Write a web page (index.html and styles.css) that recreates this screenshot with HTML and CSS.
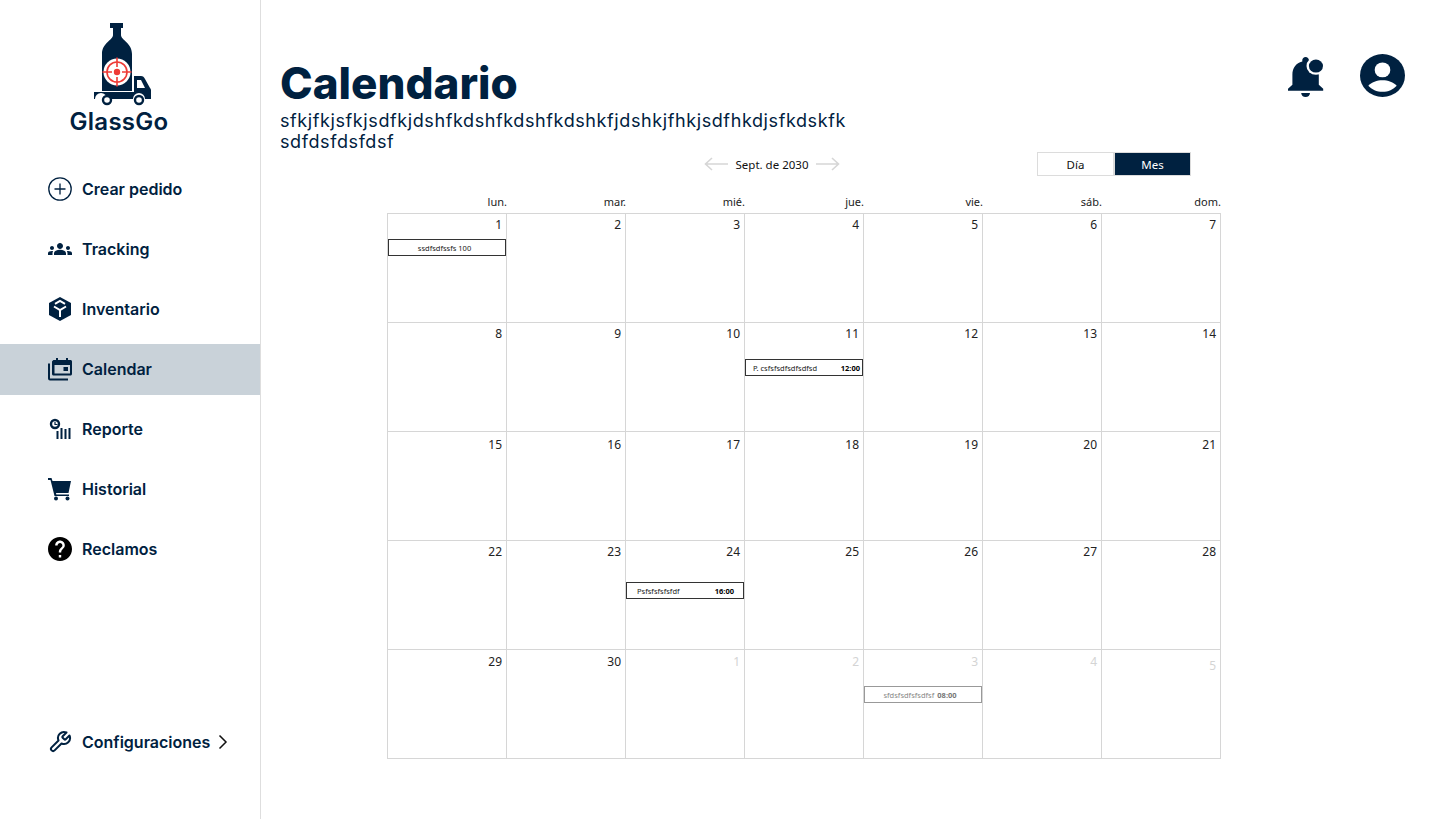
FILE: index.html
```html
<!DOCTYPE html>
<html lang="es">
<head>
<meta charset="UTF-8">
<meta name="viewport" content="width=device-width, initial-scale=1.0">
<title>GlassGo - Calendario</title>
<link rel="stylesheet" href="styles.css">
</head>
<body>
<aside class="sidebar">
    <div class="logo">
        <svg class="logo-mark" viewBox="94 22 58 84" width="58" height="84">
            <path fill="#002140" d="M110 23h13v5h-2v7c0 5 11 8 11 19v37h-30V54c0-11 11-14 11-19v-7h-3z"/>
            <circle cx="117" cy="72" r="13.500" fill="#fff"/>
            <g fill="none" stroke="#ee3b36" stroke-width="1.600">
                <circle cx="117" cy="72" r="10"/>
                <path d="M117 57.500v9.500M117 77v9.500M102.500 72h9.500M122 72h9.500"/>
            </g>
            <circle cx="117" cy="72" r="3.200" fill="#ee3b36"/>
            <path fill="#002140" d="M134 76h7c2 0 3 1 4 3l5 9c1 1 1 2 1 3v8h-6a6 6 0 0 0-12 0h-26a6 6 0 0 0-12 0h-1v-7h40z"/>
            <path fill="#fff" d="M137 80h4l4 8h-8z"/>
            <circle cx="107" cy="100" r="4" fill="#fff" stroke="#002140" stroke-width="2.400"/>
            <circle cx="139" cy="100" r="4" fill="#fff" stroke="#002140" stroke-width="2.400"/>
        </svg>
        <span class="logo-name">GlassGo</span>
    </div>
    <nav class="nav">
        <a class="nav-item">
            <svg class="nav-icon" viewBox="0 0 24 24"><circle cx="12" cy="12" r="11.200" fill="none" stroke="#002140" stroke-width="1.300"/><path d="M12 6.500v11M6.500 12h11" stroke="#002140" stroke-width="1.300"/></svg>
            Crear pedido
        </a>
        <a class="nav-item">
            <svg class="nav-icon" viewBox="0 0 24 24"><path fill="#002140" d="M4 13c1.100 0 2-.9 2-2s-.9-2-2-2-2 .9-2 2 .9 2 2 2zm1.130 1.100c-.37-.06-.74-.1-1.130-.1-.99 0-1.930.21-2.780.58C.48 14.900 0 15.620 0 16.430V18h4.500v-1.610c0-.83.23-1.610.63-2.290zM20 13c1.100 0 2-.9 2-2s-.9-2-2-2-2 .9-2 2 .9 2 2 2zm4 3.430c0-.81-.48-1.530-1.220-1.850-.85-.37-1.790-.58-2.780-.58-.39 0-.76.04-1.130.1.4.68.63 1.460.63 2.290V18H24v-1.570zM16.240 13.650c-1.170-.52-2.610-.9-4.240-.9-1.630 0-3.070.39-4.240.9C6.680 14.130 6 15.210 6 16.390V18h12v-1.610c0-1.180-.68-2.260-1.760-2.740zM12 12c1.660 0 3-1.340 3-3s-1.340-3-3-3-3 1.340-3 3 1.340 3 3 3z"/></svg>
            Tracking
        </a>
        <a class="nav-item">
            <svg class="nav-icon" viewBox="0 0 24 24"><path fill="#002140" d="M12 0l11 6v12l-11 6-11-6V6z"/><path fill="none" stroke="#fff" stroke-width="2" d="M6 9.500l6 3.500 6-3.500M12 13v7M7 6.800l5-2.800 5 2.800"/></svg>
            Inventario
        </a>
        <a class="nav-item nav-item-active">
            <svg class="nav-icon" viewBox="0 0 24 24"><path fill="#002140" d="M8 1h2v2h8V1h2v2h2.500c.8 0 1.500.7 1.500 1.500V17c0 .8-.7 1.500-1.500 1.500h-17c-.8 0-1.500-.7-1.500-1.500V4.500C4.500 3.700 5.200 3 6 3h2zM6.500 8v8.500h15.500V8zM15.500 10h4.500v4h-4.500z"/><path fill="none" stroke="#002140" stroke-width="2" d="M1 6.500V21.500c0 .5.500 1 1 1h18"/></svg>
            Calendar
        </a>
        <a class="nav-item">
            <svg class="nav-icon" viewBox="0 0 24 24"><circle cx="7" cy="7" r="4" fill="none" stroke="#002140" stroke-width="2.400"/><path d="M7 5v2.500h2.500" fill="none" stroke="#002140" stroke-width="1.200"/><path d="M9.500 22V14M13.500 22V11M17.500 22V12M21.500 22V11" stroke="#002140" stroke-width="2"/></svg>
            Reporte
        </a>
        <a class="nav-item">
            <svg class="nav-icon" viewBox="0 0 24 24"><path fill="#002140" d="M0 1h3.500l1 3H23l-2.500 12H8l.3 1.500H21V19H6.500L2.500 3H0z"/><circle cx="8" cy="21.500" r="2" fill="#002140"/><circle cx="19.500" cy="21.500" r="2" fill="#002140"/></svg>
            Historial
        </a>
        <a class="nav-item">
            <svg class="nav-icon" viewBox="2 2 20 20"><path fill="#000" d="M12 2C6.480 2 2 6.480 2 12s4.480 10 10 10 10-4.480 10-10S17.520 2 12 2zm1 17h-2v-2h2v2zm2.070-7.750l-.9.920C13.450 12.900 13 13.500 13 15h-2v-.5c0-1.100.45-2.100 1.170-2.830l1.240-1.260c.37-.36.59-.86.59-1.410 0-1.100-.9-2-2-2s-2 .9-2 2H8c0-2.210 1.790-4 4-4s4 1.790 4 4c0 .88-.36 1.680-.93 2.250z"/></svg>
            Reclamos
        </a>
    </nav>
    <a class="nav-item nav-config">
        <svg class="nav-icon" viewBox="0 0 24 24"><path fill="none" stroke="#002140" stroke-width="2" stroke-linejoin="round" d="M14.700 6.300a1 1 0 0 0 0 1.400l1.600 1.600a1 1 0 0 0 1.400 0l3.770-3.770a6 6 0 0 1-7.940 7.940l-6.910 6.910a2.120 2.120 0 0 1-3-3l6.910-6.910a6 6 0 0 1 7.940-7.940l-3.760 3.760z"/></svg>
        Configuraciones
        <svg class="config-chevron" viewBox="0 0 10 16" width="10" height="16"><path d="M1.500 1.500 8 8l-6.500 6.500" fill="none" stroke="#111" stroke-width="1.500"/></svg>
    </a>
</aside>

<main class="content">
    <header class="top">
        <div>
            <h1 class="title">Calendario</h1>
            <p class="subtitle">sfkjfkjsfkjsdfkjdshfkdshfkdshfkdshkfjdshkjfhkjsdfhkdjsfkdskfk<br>sdfdsfdsfdsf</p>
        </div>
        <div class="top-icons">
            <svg class="bell" viewBox="4 2.500 20 19.500" width="44" height="40" preserveAspectRatio="none"><path fill="#002140" d="M12 22c1.100 0 2-.9 2-2h-4c0 1.100.89 2 2 2zm6-6v-5c0-3.070-1.640-5.640-4.500-6.320V4c0-.83-.67-1.500-1.500-1.500s-1.500.67-1.500 1.500v.68C7.630 5.360 6 7.920 6 11v5l-2 2v1h16v-1l-2-2z"/><circle cx="16.700" cy="6.900" r="4.300" fill="#fff"/><circle cx="16.700" cy="6.900" r="3.200" fill="#002140"/></svg>
            <svg class="user" viewBox="0 0 46 46" width="45" height="43" preserveAspectRatio="none"><circle cx="23" cy="23" r="23" fill="#002140"/><circle cx="23" cy="17" r="8" fill="#fff"/><path fill="#fff" d="M8.500 34c3-4 9-6 14.500-6s11.500 2 14.500 6c-3.500 4-8.500 6.500-14.500 6.500S12 38 8.500 34z"/></svg>
        </div>
    </header>

    <section class="calendar">
        <div class="toolbar">
            <div class="month-nav">
                <svg viewBox="0 0 24 14" width="24" height="14"><path d="M24 7H1M8 1 1.500 7 8 13" fill="none" stroke="#d6d6d6" stroke-width="1.600"/></svg>
                <span>Sept. de 2030</span>
                <svg viewBox="0 0 24 14" width="24" height="14"><path d="M0 7h23M16 1l6.500 6L16 13" fill="none" stroke="#d6d6d6" stroke-width="1.600"/></svg>
            </div>
            <div class="toggle">
                <span class="toggle-btn">Día</span>
                <span class="toggle-btn toggle-btn-on">Mes</span>
            </div>
        </div>
        <div class="weekdays">
            <span>lun.</span><span>mar.</span><span>mié.</span><span>jue.</span><span>vie.</span><span>sáb.</span><span>dom.</span>
        </div>
        <div class="grid">
            <div class="cell"><span class="date">1</span><div class="event event-a event-center">ssdfsdfssfs 100</div></div>
            <div class="cell"><span class="date">2</span></div>
            <div class="cell"><span class="date">3</span></div>
            <div class="cell"><span class="date">4</span></div>
            <div class="cell"><span class="date">5</span></div>
            <div class="cell"><span class="date">6</span></div>
            <div class="cell"><span class="date">7</span></div>

            <div class="cell"><span class="date">8</span></div>
            <div class="cell"><span class="date">9</span></div>
            <div class="cell"><span class="date">10</span></div>
            <div class="cell"><span class="date">11</span><div class="event event-b"><span>P. csfsfsdfsdfsdfsd</span><b>12:00</b></div></div>
            <div class="cell"><span class="date">12</span></div>
            <div class="cell"><span class="date">13</span></div>
            <div class="cell"><span class="date">14</span></div>

            <div class="cell row-low"><span class="date">15</span></div>
            <div class="cell row-low"><span class="date">16</span></div>
            <div class="cell row-low"><span class="date">17</span></div>
            <div class="cell row-low"><span class="date">18</span></div>
            <div class="cell row-low"><span class="date">19</span></div>
            <div class="cell row-low"><span class="date">20</span></div>
            <div class="cell row-low"><span class="date">21</span></div>

            <div class="cell"><span class="date">22</span></div>
            <div class="cell"><span class="date">23</span></div>
            <div class="cell"><span class="date">24</span><div class="event event-c"><span>Psfsfsfsfsfdf</span><b>16:00</b></div></div>
            <div class="cell"><span class="date">25</span></div>
            <div class="cell"><span class="date">26</span></div>
            <div class="cell"><span class="date">27</span></div>
            <div class="cell"><span class="date">28</span></div>

            <div class="cell row-last"><span class="date">29</span></div>
            <div class="cell row-last"><span class="date">30</span></div>
            <div class="cell row-last other"><span class="date">1</span></div>
            <div class="cell row-last other"><span class="date">2</span></div>
            <div class="cell row-last other"><span class="date">3</span><div class="event event-d event-center event-faded"><span>sfdsfsdfsfsdfsf</span><b>08:00</b></div></div>
            <div class="cell row-last other"><span class="date">4</span></div>
            <div class="cell row-last other date-low"><span class="date">5</span></div>
        </div>
    </section>
</main>
</body>
</html>
```

FILE: styles.css
```css
* {
    box-sizing: border-box;
}
body {
    display: flex;
    height: 819px;
    margin: 0;
    overflow: hidden;
    background: #fff;
    color: #002140;
    font-family: "Noto Sans", sans-serif;
}

/* sidebar */
.sidebar {
    display: flex;
    flex-direction: column;
    flex: 0 0 261px;
    padding-bottom: 51px;
    border-right: 1px solid #dedede;
}
.logo {
    display: flex;
    flex-direction: column;
    align-items: center;
    height: 164px;
    padding: 22px 22px 0 0;
}
.logo-mark {
    display: block;
    margin-left: 7px;
}
.logo-name {
    margin-top: 1px;
    font-family: "Inter", sans-serif;
    font-size: 24px;
    line-height: 30px;
    font-weight: 600;
    letter-spacing: 0.3px;
}
.nav {
    display: flex;
    flex-direction: column;
    gap: 9px;
}
.nav-item {
    display: flex;
    align-items: center;
    gap: 10px;
    height: 51px;
    padding: 0 0 2px 48px;
    font-family: "Inter", sans-serif;
    font-size: 16px;
    font-weight: 600;
    color: #002140;
}
.nav-item-active {
    background: #c9d2d9;
}
.nav-icon {
    flex: none;
    width: 24px;
    height: 24px;
}
.nav-config {
    margin-top: auto;
}
.config-chevron {
    margin-left: -2px;
}

/* main */
.content {
    flex: 1;
    padding: 57px 0 0 19px;
}
.top {
    display: flex;
    justify-content: space-between;
    align-items: flex-start;
    height: 95px;
}
.title {
    margin: 0;
    font-family: "Inter", sans-serif;
    font-size: 44px;
    line-height: 52px;
    font-weight: 800;
}
.subtitle {
    margin: 1px 0 0;
    font-family: "Inter", sans-serif;
    font-size: 18px;
    line-height: 21px;
    letter-spacing: 0.6px;
}
.top-icons {
    display: flex;
    align-items: flex-start;
    gap: 28px;
    margin: -3px 35px 0 0;
}
.bell {
    margin-top: 3px;
}

/* calendar */
.calendar {
    width: 834px;
    margin-left: 107px;
}
.toolbar {
    display: flex;
    align-items: center;
    height: 24px;
    font-size: 11.5px;
    color: #111;
}
.month-nav {
    display: flex;
    align-items: center;
    gap: 6px;
    margin-left: 317px;
}
.month-nav span {
    width: 76px;
    text-align: center;
    white-space: nowrap;
}
.toggle {
    display: flex;
    margin-left: 197px;
}
.toggle-btn {
    display: flex;
    align-items: center;
    justify-content: center;
    width: 77px;
    height: 24px;
    border: 1px solid #dcdcdc;
}
.toggle-btn-on {
    background: #002140;
    color: #fff;
}
.weekdays {
    display: grid;
    grid-template-columns: repeat(7, 119px);
    height: 37px;
    padding: 18px 0 0 1px;
    font-size: 11px;
    line-height: 15px;
    color: #222;
    text-align: right;
}
.grid {
    display: grid;
    grid-template-columns: repeat(7, 119px);
    grid-auto-rows: 109px;
    width: 834px;
    border-top: 1px solid #d6d6d6;
    border-left: 1px solid #d6d6d6;
}
.cell {
    border-right: 1px solid #d6d6d6;
    border-bottom: 1px solid #d6d6d6;
}
.date {
    display: block;
    height: 18px;
    padding: 3px 4px 0 0;
    font-size: 12px;
    line-height: 16px;
    text-align: right;
    color: #222;
}
.row-low .date {
    padding-top: 5px;
}
.row-last .date {
    padding-top: 4px;
}
.date-low .date {
    padding-top: 8px;
}
.other .date {
    color: #d4d4d4;
}
.event {
    display: flex;
    justify-content: space-between;
    align-items: center;
    height: 17px;
    padding: 0 2px 0 7px;
    border: 1px solid #333;
    font-size: 7.5px;
    color: #222;
    white-space: nowrap;
}
.event b {
    color: #000;
}
.event-center {
    justify-content: center;
    gap: 3px;
}
.event-faded {
    border-color: #999;
    color: #888;
}
.event-faded b {
    color: #777;
}
.event-a {
    margin-top: 7px;
    padding: 0 5px 0 0;
}
.event-b {
    margin-top: 18px;
}
.event-c {
    margin-top: 23px;
    padding: 0 9px 0 10px;
}
.event-d {
    margin-top: 18px;
    padding: 0 6px 0 0;
}
```
